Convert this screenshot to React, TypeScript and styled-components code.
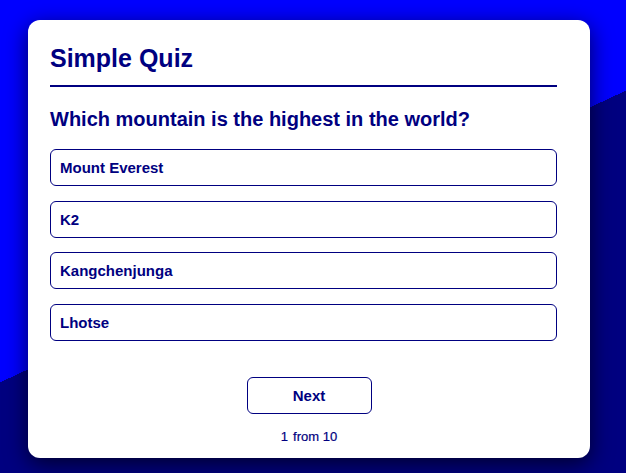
import React from "react";
import styled, { createGlobalStyle } from "styled-components";

const Global = createGlobalStyle`
  html, body { margin: 0; padding: 0; height: 100%; }
  body {
    font-family: "Liberation Sans", Arial, sans-serif;
    background: linear-gradient(155deg, #0000ff 50%, #000080 50%);
    min-height: 473px;
    overflow: hidden;
  }
`;

const Page = styled.div`
  display: flex;
  justify-content: flex-start;
  padding: 20px 0 0 28px;
  box-sizing: border-box;
  height: 473px;
`;

const Card = styled.div`
  width: 562px;
  height: 438px;
  box-sizing: border-box;
  background: #fff;
  border-radius: 12px;
  box-shadow: 0 6px 22px rgba(0, 0, 0, 0.65);
  padding: 23px 22px 0 22px;
  display: flex;
  flex-direction: column;
  color: #000080;
`;

const Body = styled.div`
  margin-right: 11px;
  display: flex;
  flex-direction: column;
`;

const Title = styled.h1`
  margin: 0;
  font-size: 25px;
  font-weight: bold;
  line-height: 30px;
  padding-bottom: 12px;
  border-bottom: 2px solid #000080;
`;

const Question = styled.h2`
  margin: 20px 0 0;
  font-size: 20px;
  font-weight: bold;
  line-height: 24px;
`;

const Options = styled.div`
  margin-top: 18px;
  display: flex;
  flex-direction: column;
  gap: 14.5px;
`;

const Option = styled.button`
  height: 37px;
  box-sizing: border-box;
  text-align: left;
  padding: 0 9px;
  background: #fff;
  border: 1px solid #000080;
  border-radius: 6px;
  color: #000080;
  font-family: "Liberation Sans", Arial, sans-serif;
  font-size: 15px;
  font-weight: bold;
  cursor: pointer;
`;

const Footer = styled.div`
  margin-top: 36.5px;
  display: flex;
  flex-direction: column;
  align-items: center;
  gap: 15px;
`;

const NextButton = styled.button`
  width: 125px;
  height: 37px;
  background: #fff;
  border: 1px solid #000080;
  border-radius: 6px;
  color: #000080;
  font-family: "Liberation Sans", Arial, sans-serif;
  font-size: 15px;
  font-weight: bold;
  cursor: pointer;
`;

const Counter = styled.div`
  font-size: 13px;
  font-weight: normal;
  color: #000080;
  -webkit-text-stroke: 0.2px #000080;
`;

const Num = styled.span`
  margin-right: 5px;
`;

const options = ["Mount Everest", "K2", "Kangchenjunga", "Lhotse"];

export default function App() {
  return (
    <>
      <Global />
      <Page>
        <Card>
          <Body>
            <Title>Simple Quiz</Title>
            <Question>Which mountain is the highest in the world?</Question>
            <Options>
              {options.map((o) => (
                <Option key={o}>{o}</Option>
              ))}
            </Options>
          </Body>
          <Footer>
            <NextButton>Next</NextButton>
            <Counter>
              <Num>1</Num>from 10
            </Counter>
          </Footer>
        </Card>
      </Page>
    </>
  );
}
